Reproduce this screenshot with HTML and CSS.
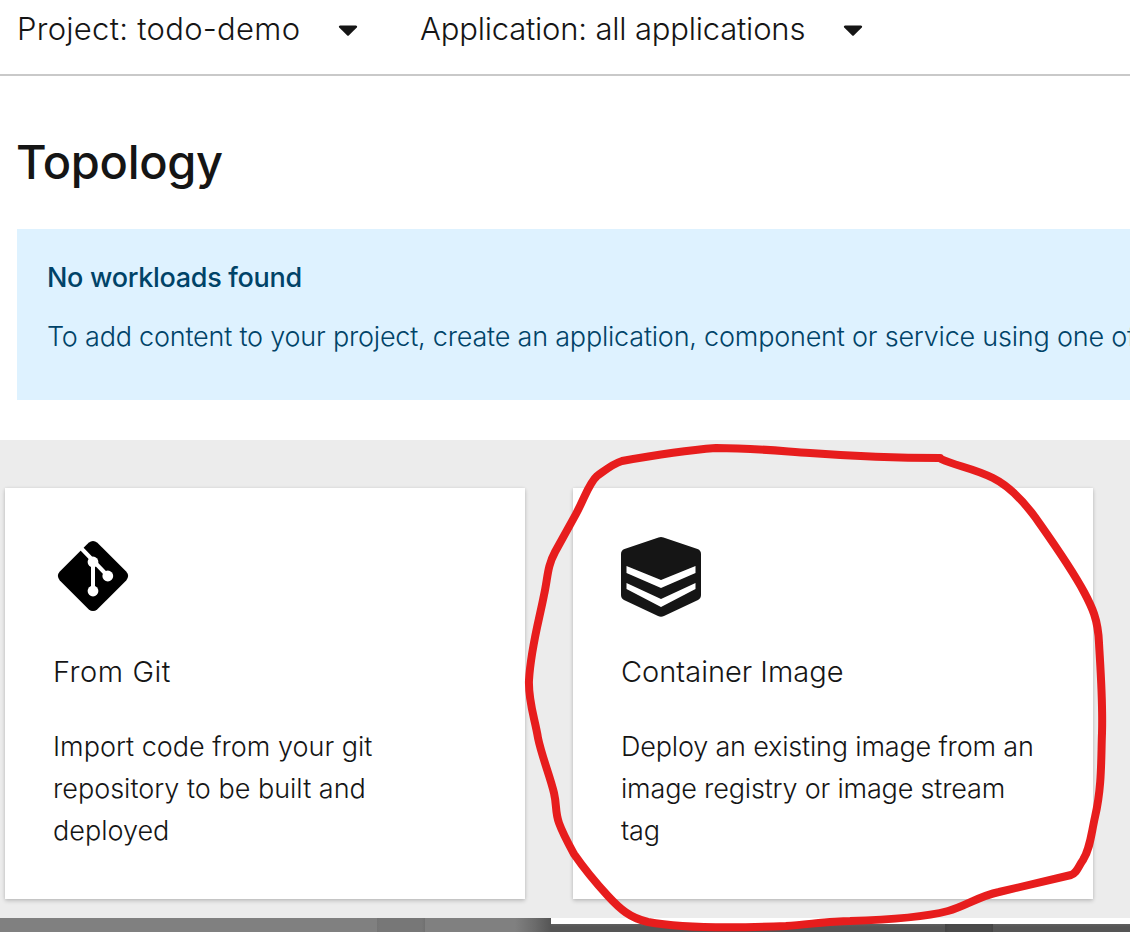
FILE: index.html
```html
<!DOCTYPE html>
<html lang="en">
<head>
<meta charset="utf-8">
<title>Topology</title>
<link rel="stylesheet" href="styles.css">
</head>
<body>
<div class="page">
  <header class="toolbar">
    <div class="selector project"><span class="selector-text">Project: todo-demo</span><svg class="caret" viewBox="0 0 20 12"><path d="M2 0.5H18Q20 1 18.8 2.4L11 10.3Q10 11.3 9 10.3L1.2 2.4Q0 1 2 0.5Z"/></svg></div>
    <div class="selector application"><span class="selector-text">Application: all applications</span><svg class="caret" viewBox="0 0 20 12"><path d="M2 0.5H18Q20 1 18.8 2.4L11 10.3Q10 11.3 9 10.3L1.2 2.4Q0 1 2 0.5Z"/></svg></div>
  </header>
  <main>
    <h1 class="title">Topology</h1>
    <section class="alert">
      <h2 class="alert-title">No workloads found</h2>
      <p class="alert-text">To add content to your project, create an application, component or service using one of</p>
    </section>
    <section class="cards">
      <article class="card">
        <svg class="icon" viewBox="0 0 80 80">
          <path d="M35.6 6.8Q40 3 44.4 6.8L73.2 35.6Q77 40 73.2 44.4L44.4 73.2Q40 77 35.6 73.2L6.8 44.4Q3 40 6.8 35.6Z"/>
          <path class="cut-line" d="M28 12L40 24.5L54.8 40M40 25V55"/>
          <circle class="cut" cx="40" cy="26" r="5.4"/><circle class="cut" cx="54.8" cy="40" r="5.4"/><circle class="cut" cx="40" cy="55" r="5.4"/>
        </svg>
        <h3 class="card-title git-title">From Git</h3>
        <p class="card-text git-text">Import code from your git<br>repository to be built and<br>deployed</p>
      </article>
      <article class="card">
        <svg class="icon image-icon" viewBox="0 0 80 80">
          <path d="M37.5 0.5Q40 -0.3 42.5 0.5L76.5 12Q80 13.3 80 17V58Q80 61.3 77 63L43 79Q40 80.5 37 79L3 63Q0 61.3 0 58V17Q0 13.3 3.5 12Z"/>
          <path class="cut" d="M5.5 29L40 43L74.5 29V36L40 51L5.5 36ZM5.5 46L40 62L74.5 46V52L40 70L5.5 52Z"/>
        </svg>
        <h3 class="card-title image-title">Container Image</h3>
        <p class="card-text image-text">Deploy an existing image from an<br>image registry or image stream<br>tag</p>
      </article>
    </section>
  </main>
  <footer class="backdrop">
    <div class="backdrop-left"></div>
    <div class="backdrop-right"></div>
  </footer>
  <svg class="annotation" viewBox="0 0 1130 932"><path d="M940 458C890 458 850 456 810 453C780 451 752 448 716 448C690 450 655 455 622 461C612 464 603 472 597 476C589 483 585 497 576 514L555 552C547 567 548 577 544 595C539 621 531 647 529 680C528 701 535 719 538 738C542 757 550 776 554 793C557 806 555 812 559 823C563 834 568 843 574 854C583 867 596 883 608 896C620 909 630 918 648 922C680 928 738 928 786 926C812 924 832 921 850 921C884 920 921 918 948 911C966 906 979 896 999 892L1071 875C1077 873 1078 867 1083 860C1090 849 1091 835 1095 817C1102 787 1101 759 1102 733C1103 700 1100 662 1099 643C1098 619 1092 607 1084 592C1070 566 1049 537 1035 517C1021 498 1009 486 993 478C973 468 956 466 941 459"/></svg>
</div>
</body>
</html>
```
FILE: styles.css
```css
* { box-sizing: border-box; }
body { margin: 0; background: #fff; color: #151515; font-family: Inter, "Open Sans", sans-serif; font-weight: 300; }
h1, h2, h3, p { margin: 0; white-space: nowrap; }
.page { position: relative; width: 1130px; height: 932px; overflow: hidden; display: flex; flex-direction: column; }
.toolbar { height: 76px; flex: none; border-bottom: 2px solid #c9c9c9; padding-left: 17px; display: flex; align-items: flex-start; }
.selector { display: flex; align-items: center; height: 57px; font-size: 31px; white-space: nowrap; }
.project { width: 403px; letter-spacing: 0.28px; }
.application { letter-spacing: -0.19px; }
.project .selector-text { width: 321px; }
.application .selector-text { width: 423px; }
.caret { width: 20px; height: 12px; fill: #151515; margin-top: 4px; }
main { flex: none; height: 842px; display: flex; flex-direction: column; }
.title { font-size: 47px; font-weight: 450; letter-spacing: -0.3px; line-height: 60px; padding: 56px 0 37px 16px; height: 153px; }
.alert { height: 171px; margin-left: 17px; padding: 29px 0 0 30px; background: #def2ff; color: #004368; overflow: hidden; }
.alert-title { font-size: 27px; font-weight: 480; letter-spacing: -0.3px; line-height: 40px; }
.alert-text { font-size: 27px; letter-spacing: -0.21px; line-height: 40px; margin-top: 19px; }
.cards { margin-top: 40px; height: 478px; padding: 48px 0 0 5px; background: #ececec; display: flex; gap: 48px; }
.card { width: 520px; height: 411px; padding: 48px; background: #fff; box-shadow: 0 2px 4px rgba(3,3,3,.18), 0 0 3px rgba(3,3,3,.08); }
.icon { display: block; width: 80px; height: 80px; }
.image-icon { fill: #151515; margin-top: 1px; margin-bottom: -1px; }
.cut { fill: #fff; }
.cut-line { fill: none; stroke: #fff; stroke-width: 4; }
.card-title { margin-top: 36px; font-size: 29px; font-weight: 300; line-height: 40px; }
.git-title { letter-spacing: 0.55px; }
.card-text { margin-top: 34px; font-size: 27px; line-height: 42px; }
.image-text { letter-spacing: -0.18px; }
.backdrop { height: 14px; flex: none; display: flex; }
.backdrop-left { width: 551px; background: linear-gradient(90deg, transparent 377px, #747474 377px, #777 380px, #777 422px, #707070 425px, transparent 425px), linear-gradient(90deg, #808080 515px, #6b6b6b 535px, #555 551px); }
.backdrop-right { width: 579px; border-top: 6px solid #fff; background: linear-gradient(90deg, transparent 394px, #444 394px, #4a4a4a 398px, #4a4a4a 439px, #444 442px, transparent 442px), linear-gradient(#606060, #555 3px); }
.annotation { position: absolute; inset: 0; width: 1130px; height: 932px; fill: none; stroke: #e71d1d; stroke-width: 8; stroke-linecap: round; stroke-linejoin: round; }
```
